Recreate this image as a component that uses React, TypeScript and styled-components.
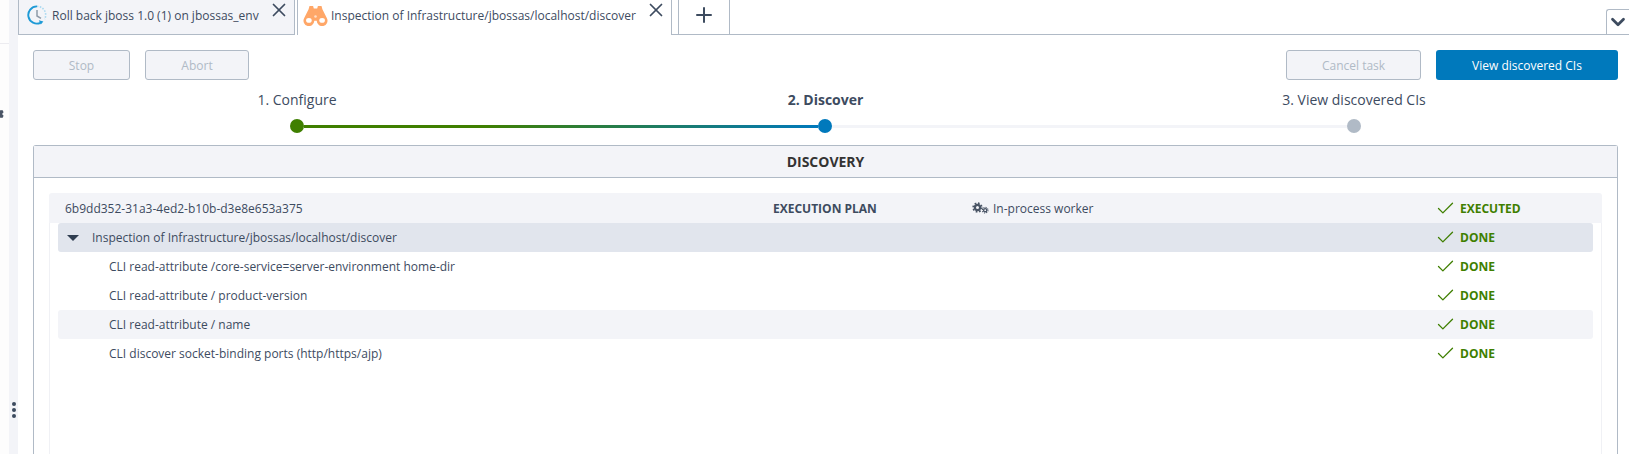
import * as React from "react";
import styled, { createGlobalStyle } from "styled-components";
import { Check, ChevronDown, Plus, X } from "lucide-react";
import { FaCog } from "react-icons/fa";

const colors = {
  text: "#3d4b5f",
  border: "#b0bac6",
  panel: "#f3f4f8",
  rowDark: "#e1e5ed",
  blue: "#0079bc",
  green: "#3f7f00",
  disabled: "#b0bac6",
};

const GlobalStyle = createGlobalStyle`
  html, body {
    margin: 0;
    padding: 0;
    background: #fff;
    overflow: hidden;
  }
  body {
    font-family: "Open Sans", "Liberation Sans", sans-serif;
    font-size: 12px;
    color: ${colors.text};
  }
`;

const HistoryIcon = () => (
  <svg width="20" height="20" viewBox="0 0 20 20" fill="none">
    <path d="M13.5 17.8A8.6 8.6 0 1 1 10 1.4" stroke="#1e9ad6" strokeWidth="1.9" />
    <path d="M10 1.4A8.6 8.6 0 0 1 17.6 14.2" stroke="#a9d8f0" strokeWidth="1.6" strokeDasharray="1.5 1.4" />
    <path d="M10 5v6l4 2.4" stroke="#8f9aa8" strokeWidth="1.5" />
    <path d="M11.8 15.2l4.6 1.4-2.6 2.8z" fill="#1e9ad6" />
  </svg>
);

const BinocularsIcon = () => (
  <svg width="25" height="21" viewBox="0 0 25 21">
    <path
      d="M6.5 1h3.6l.7 2.6h3.4l.7-2.6h3.6l.9 3.2 4.5 9a5.4 5.4 0 1 1-10.2 2.6h-2.4a5.4 5.4 0 1 1-10.2-2.6l4.5-9z"
      fill="#ffa768"
    />
    <ellipse cx="5.9" cy="15.4" rx="2.8" ry="2.4" fill="#fff" />
    <ellipse cx="19.1" cy="15.4" rx="2.8" ry="2.4" fill="#fff" />
    <circle cx="12.5" cy="11.5" r="1.3" fill="#ffe0c8" />
  </svg>
);

// big gear with a small one at its lower right
const GearsIcon = () => (
  <svg width="17" height="12" viewBox="0 0 17 12" fill="none" stroke="#4a5566">
    <circle cx="5.5" cy="5.5" r="2.6" strokeWidth="2.2" />
    <circle cx="5.5" cy="5.5" r="4.4" strokeWidth="1.6" strokeDasharray="1.7 1.75" />
    <circle cx="13.2" cy="8.2" r="1.6" strokeWidth="1.4" />
    <circle cx="13.2" cy="8.2" r="2.8" strokeWidth="1.1" strokeDasharray="1.1 1.1" />
  </svg>
);

const rows = [
  { label: "CLI read-attribute /core-service=server-environment home-dir" },
  { label: "CLI read-attribute / product-version" },
  { label: "CLI read-attribute / name", shaded: true },
  { label: "CLI discover socket-binding ports (http/https/ajp)" },
];

export default function App() {
  return (
    <Page>
      <GlobalStyle />
      <Rail>
        <RailEdge>
          <RailDivider />
          <RailGear>
            <FaCog size={12} color="#4a5566" />
          </RailGear>
        </RailEdge>
        <RailStrip>
          <RailDots>
            <i />
            <i />
            <i />
          </RailDots>
        </RailStrip>
      </Rail>
      <Main>
        <TabBar>
          <Tab $width={277} $pad={9} $gap={5}>
            <HistoryIcon />
            <TabLabel>Roll back jboss 1.0 (1) on jbossas_env</TabLabel>
            <TabClose>
              <X size={22} strokeWidth={1.9} />
            </TabClose>
          </Tab>
          <Tab $active $width={375} $pad={6} $gap={3}>
            <BinocularsIcon />
            <TabLabel>Inspection of Infrastructure/jbossas/localhost/discover</TabLabel>
            <TabClose>
              <X size={22} strokeWidth={1.9} />
            </TabClose>
          </Tab>
          <TabGap />
          <AddTab>
            <Plus size={24} strokeWidth={2} />
          </AddTab>
          <TabFill />
          <TabMenu>
            <ChevronDown size={24} strokeWidth={3} />
          </TabMenu>
        </TabBar>
        <Content>
          <Toolbar>
            <Button $width={97}>Stop</Button>
            <Button $width={104}>Abort</Button>
            <Spacer />
            <Button $width={135}>Cancel task</Button>
            <PrimaryButton>View discovered CIs</PrimaryButton>
          </Toolbar>
          <Stepper>
            <StepLabels>
              <StepLabel>1. Configure</StepLabel>
              <StepLabel $current>2. Discover</StepLabel>
              <StepLabel>3. View discovered CIs</StepLabel>
            </StepLabels>
            <Track>
              <Dot $color={colors.green} />
              <DoneSegment />
              <Dot $color={colors.blue} />
              <TodoSegment />
              <Dot $color={colors.disabled} />
            </Track>
          </Stepper>
          <Panel>
            <PanelHeader>DISCOVERY</PanelHeader>
            <PanelBody>
              <Plan>
                <PlanHead>
                  <PlanId>6b9dd352-31a3-4ed2-b10b-d3e8e653a375</PlanId>
                  <PlanTitle>EXECUTION PLAN</PlanTitle>
                  <Worker>
                    <GearsIcon />
                    In-process worker
                  </Worker>
                  <Status $width={167}>
                    <Check size={21} strokeWidth={1.5} />
                    EXECUTED
                  </Status>
                </PlanHead>
                <Steps>
                  <Step $tone="dark" $rounded>
                    <Caret />
                    <StepName>Inspection of Infrastructure/jbossas/localhost/discover</StepName>
                    <Status $width={158}>
                      <Check size={21} strokeWidth={1.5} />
                      DONE
                    </Status>
                  </Step>
                  {rows.map((row) => (
                    <Step key={row.label} $tone={row.shaded ? "light" : "none"} $rounded={row.shaded}>
                      <StepName $nested>{row.label}</StepName>
                      <Status $width={158}>
                        <Check size={21} strokeWidth={1.5} />
                        DONE
                      </Status>
                    </Step>
                  ))}
                </Steps>
              </Plan>
            </PanelBody>
          </Panel>
        </Content>
      </Main>
    </Page>
  );
}

const Page = styled.div`
  display: flex;
  width: 1629px;
  height: 454px;
  overflow: hidden;
`;

const Rail = styled.div`
  display: flex;
  flex: 0 0 18px;
`;

const RailEdge = styled.div`
  flex: 0 0 9px;
  background: #fdfdfd;
  overflow: hidden;
`;

const RailDivider = styled.div`
  height: 43px;
  border-bottom: 1px solid #ececf0;
`;

const RailGear = styled.div`
  display: flex;
  margin: 64px 0 0 -8.5px;
`;

const RailStrip = styled.div`
  flex: 0 0 9px;
  min-width: 0;
  background: ${colors.panel};
  padding-top: 402px;
  box-sizing: border-box;
`;

const RailDots = styled.div`
  display: flex;
  flex-direction: column;
  align-items: center;
  gap: 2px;

  i {
    display: block;
    width: 4px;
    height: 4px;
    border-radius: 50%;
    background: #3d4b5f;
  }
`;

const Main = styled.div`
  flex: 1;
  min-width: 0;
  display: flex;
  flex-direction: column;
`;

const TabBar = styled.div`
  display: flex;
  align-items: flex-end;
  height: 35px;
  flex: 0 0 35px;
`;

const Tab = styled.div<{ $active?: boolean; $width: number; $pad: number; $gap: number }>`
  display: flex;
  align-items: center;
  box-sizing: border-box;
  width: ${(p) => p.$width}px;
  height: 35px;
  margin-right: ${(p) => (p.$active ? 0 : 2)}px;
  padding: 0 4px 4px ${(p) => p.$pad - 1}px;
  gap: ${(p) => p.$gap}px;
  background: ${(p) => (p.$active ? "#fff" : colors.panel)};
  border: 1px solid ${colors.border};
  border-top: 0;
  border-bottom: ${(p) => (p.$active ? "0" : `1px solid ${colors.border}`)};
`;

const TabLabel = styled.span`
  flex: 1;
  font-size: 12px;
  white-space: nowrap;
  color: ${colors.text};
`;

const TabClose = styled.span`
  display: flex;
  align-self: flex-start;
  margin-top: -1px;
`;

const TabGap = styled.div`
  width: 6px;
  height: 35px;
  box-sizing: border-box;
  border-bottom: 1px solid ${colors.border};
`;

const AddTab = styled.div`
  display: flex;
  align-items: center;
  justify-content: center;
  box-sizing: border-box;
  width: 52px;
  height: 35px;
  padding-bottom: 4px;
  border: 1px solid ${colors.border};
  border-top: 0;
  color: ${colors.text};
`;

const TabFill = styled.div`
  flex: 1;
  height: 35px;
  box-sizing: border-box;
  border-bottom: 1px solid ${colors.border};
`;

const TabMenu = styled.div`
  display: flex;
  align-items: center;
  justify-content: center;
  box-sizing: border-box;
  width: 23px;
  height: 26px;
  border: 1px solid ${colors.border};
  border-right: 0;
  border-radius: 3px 0 0 0;
  color: ${colors.text};
`;

const Content = styled.div`
  flex: 1;
  display: flex;
  flex-direction: column;
  padding: 15px 11px 0 15px;
`;

const Toolbar = styled.div`
  display: flex;
  gap: 15px;
`;

const Spacer = styled.div`
  flex: 1;
`;

const Button = styled.div<{ $width: number }>`
  display: flex;
  align-items: center;
  justify-content: center;
  box-sizing: border-box;
  width: ${(p) => p.$width}px;
  height: 30px;
  background: ${colors.panel};
  border: 1px solid ${colors.border};
  border-radius: 3px;
  color: ${colors.disabled};
  font-size: 12px;
`;

const PrimaryButton = styled.div`
  display: flex;
  align-items: center;
  justify-content: center;
  width: 182px;
  height: 30px;
  background: ${colors.blue};
  border-radius: 3px;
  color: #fff;
  font-size: 12px;
  font-weight: 500;
`;

const Stepper = styled.div`
  margin: 0 164px;
`;

const StepLabels = styled.div`
  display: flex;
  justify-content: space-between;
  height: 29px;
  padding-top: 10px;
`;

const StepLabel = styled.div<{ $current?: boolean }>`
  width: 200px;
  text-align: center;
  font-size: 14px;
  line-height: 20px;
  font-weight: ${(p) => (p.$current ? 700 : 400)};
`;

const Track = styled.div`
  display: flex;
  align-items: center;
  margin: 0 93px;
  height: 14px;
`;

const Dot = styled.div<{ $color: string }>`
  flex: 0 0 14px;
  height: 14px;
  border-radius: 50%;
  background: ${(p) => p.$color};
`;

const DoneSegment = styled.div`
  flex: 0 0 514px;
  height: 3px;
  background: linear-gradient(90deg, ${colors.green}, ${colors.green} 35%, ${colors.blue});
`;

const TodoSegment = styled.div`
  flex: 1;
  height: 3px;
  background: ${colors.panel};
`;

const Panel = styled.div`
  flex: 1;
  display: flex;
  flex-direction: column;
  margin-top: 12px;
  border: 1px solid ${colors.border};
  border-bottom: 0;
  border-radius: 3px 3px 0 0;
`;

const PanelHeader = styled.div`
  display: flex;
  align-items: center;
  justify-content: center;
  box-sizing: border-box;
  flex: 0 0 32px;
  background: ${colors.panel};
  border-bottom: 1px solid ${colors.border};
  font-size: 14px;
  font-weight: 700;
  color: #333;
`;

const PanelBody = styled.div`
  flex: 1;
  display: flex;
  padding: 15px 15px 0;
`;

const Plan = styled.div`
  flex: 1;
  display: flex;
  flex-direction: column;
  min-width: 0;
`;

const PlanHead = styled.div`
  display: flex;
  align-items: center;
  height: 30px;
  background: ${colors.panel};
  border-radius: 3px 3px 0 0;
  padding-left: 16px;
`;

const PlanId = styled.div`
  width: 708px;
`;

const PlanTitle = styled.div`
  width: 199px;
  font-weight: 700;
  font-size: 12px;
`;

const Worker = styled.div`
  display: flex;
  align-items: center;
  gap: 4px;
  flex: 1;
`;

const Steps = styled.div`
  flex: 1;
  padding: 0 8px;
  border-left: 1px solid #f0f1f5;
  border-right: 1px solid #f0f1f5;
`;

const Step = styled.div<{ $tone?: "dark" | "light" | "none"; $rounded?: boolean }>`
  display: flex;
  align-items: center;
  height: 29px;
  border-radius: ${(p) => (p.$rounded ? "3px" : "0")};
  background: ${(p) =>
    p.$tone === "dark" ? colors.rowDark : p.$tone === "light" ? colors.panel : "transparent"};
`;

const Caret = styled.div`
  flex: none;
  width: 0;
  height: 0;
  margin: 0 13px 0 9px;
  border-left: 6px solid transparent;
  border-right: 6px solid transparent;
  border-top: 6px solid #2f3d50;
`;

const StepName = styled.div<{ $nested?: boolean }>`
  flex: 1;
  padding-left: ${(p) => (p.$nested ? 51 : 0)}px;
`;

const Status = styled.div<{ $width: number }>`
  display: flex;
  align-items: center;
  gap: 4px;
  width: ${(p) => p.$width}px;
  box-sizing: border-box;
  font-size: 12px;
  font-weight: 700;
  color: ${colors.green};

  svg {
    flex: none;
  }
`;
